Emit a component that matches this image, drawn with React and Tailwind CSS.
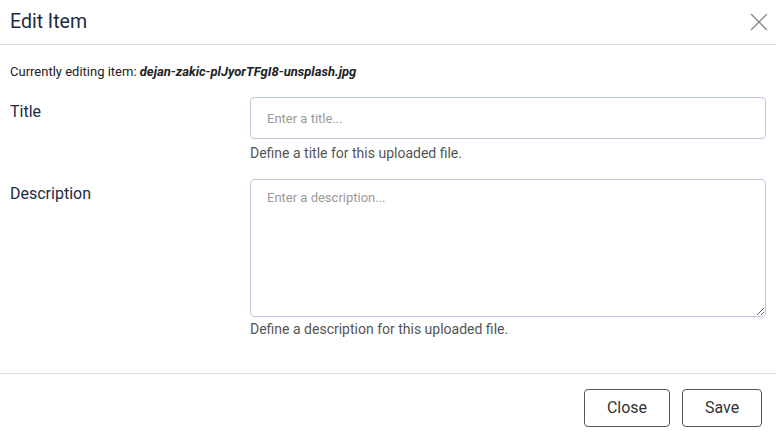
import { X } from "lucide-react";

export default function App() {
  return (
    <div className="w-[776px] h-[441px] bg-white font-['Roboto',sans-serif] flex flex-col">
      {/* Header */}
      <div className="h-[45px] flex items-center justify-between pl-[10px] pr-[2px] border-b border-[#dcdcdc]">
        <h1 className="text-[19.5px] text-[#1e2a44] leading-none">Edit Item</h1>
        <X size={30} strokeWidth={1.1} className="text-[#888]" />
      </div>

      {/* Body */}
      <div className="flex-1 px-[10px] pt-[19px]">
        <p className="text-[13px] text-[#222] leading-[15px]">
          Currently editing item: <span className="font-bold italic">dejan-zakic-plJyorTFgI8-unsplash.jpg</span>
        </p>

        <div className="flex mt-[18px]">
          <label className="w-[240px] pt-[3px] text-[16px] leading-[24px] text-[#1e2a44]">Title</label>
          <div className="flex-1">
            <input
              type="text"
              placeholder="Enter a title..."
              className="block w-full h-[42px] border border-[#b8c8da] rounded-[4px] px-4 text-[13px] placeholder:text-[#9a9a9a] outline-none"
            />
            <p className="mt-[5px] text-[14px] leading-[18px] text-[#555]">Define a title for this uploaded file.</p>
          </div>
        </div>

        <div className="flex mt-[17px]">
          <label className="w-[240px] pt-[3px] text-[16px] leading-[24px] text-[#1e2a44]">Description</label>
          <div className="flex-1">
            <textarea
              placeholder="Enter a description..."
              className="block w-full h-[138px] border border-[#b8c8da] rounded-[4px] px-4 py-[8px] text-[13px] placeholder:text-[#9a9a9a] outline-none"
            />
            <p className="mt-[3px] text-[14px] leading-[18px] text-[#555]">Define a description for this uploaded file.</p>
          </div>
        </div>
      </div>

      {/* Footer */}
      <div className="h-[68px] border-t border-[#dcdcdc] flex items-center justify-end gap-[12px] pr-[14px]">
        <button className="w-[86px] h-[38px] border border-[#555] rounded-[4px] text-[16px] text-[#333]">Close</button>
        <button className="w-[80px] h-[38px] border border-[#555] rounded-[4px] text-[16px] text-[#333]">Save</button>
      </div>
    </div>
  );
}
